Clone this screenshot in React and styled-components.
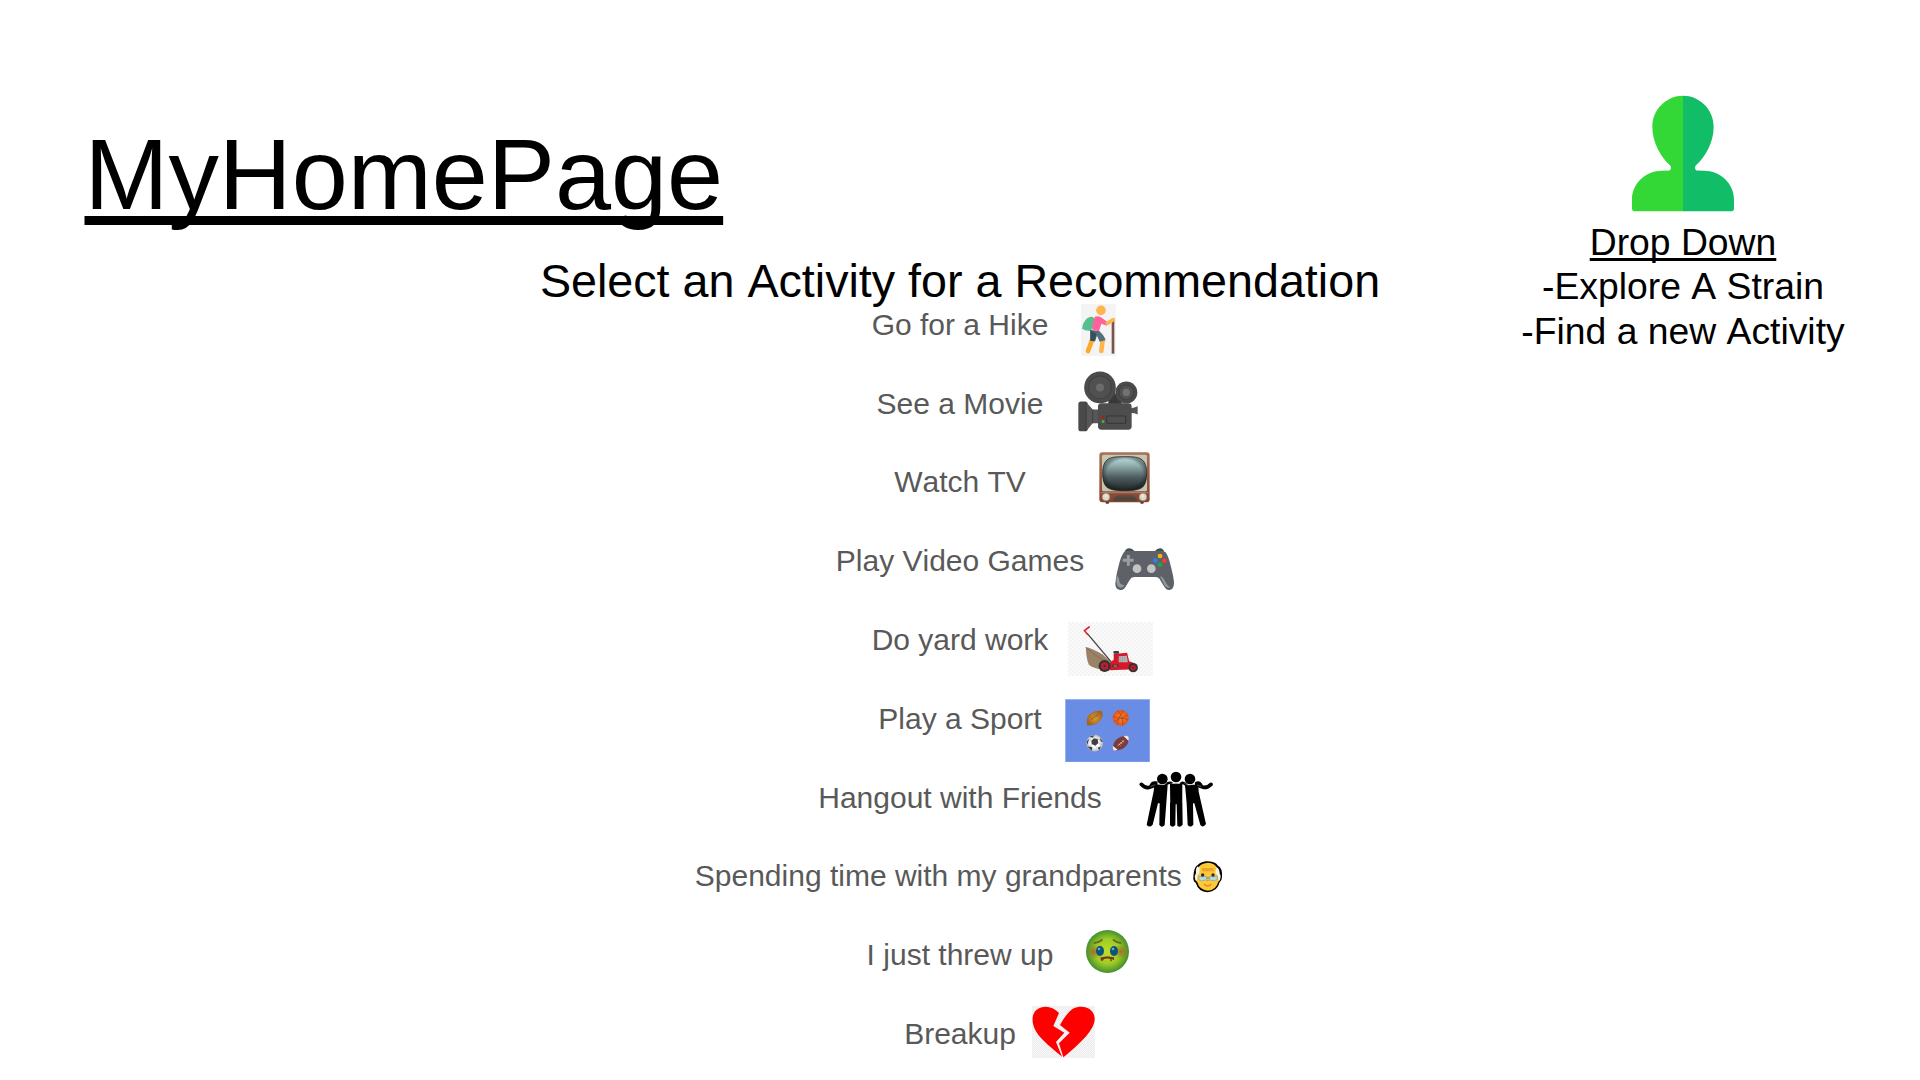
import React from "react";
import styled, { createGlobalStyle } from "styled-components";

const GlobalStyle = createGlobalStyle`
  html, body { margin: 0; background: #fff; }
  body { overflow: hidden; }
`;

const Page = styled.div`
  width: 1920px;
  height: 1080px;
  overflow: hidden;
  background: #fff;
  color: #000;
  display: grid;
  grid-template-columns: 480px 960px 480px;
  grid-template-rows: 255px 825px;
  font-family: Arial, "Liberation Sans", sans-serif;
  font-kerning: none;
`;

const Title = styled.h1`
  grid-column: 1 / 3;
  grid-row: 1;
  margin: 0;
  padding: 114px 0 0 84.5px;
  font-size: 100.8px;
  line-height: 120px;
  font-weight: 400;
  text-decoration: underline;
  text-decoration-thickness: 9px;
  text-underline-offset: 7px;
  text-decoration-skip-ink: none;
`;

const Profile = styled.aside`
  grid-column: 3;
  grid-row: 1 / 3;
  display: flex;
  flex-direction: column;
  align-items: center;
  padding: 95px 0 0 6px;
  font-size: 37.3px;
  line-height: 44.5px;
  white-space: nowrap;
`;

const Avatar = styled.svg`
  display: block;
  width: 102px;
  height: 117px;
  margin-bottom: 7.8px;
`;

const MenuTitle = styled.div`
  text-decoration: underline;
  text-decoration-thickness: 3px;
  text-underline-offset: 3px;
  text-decoration-skip-ink: none;
`;

const MenuItem = styled.div``;

const Main = styled.main`
  grid-column: 2;
  grid-row: 2;
`;

const Heading = styled.h2`
  margin: 0;
  height: 49.8px;
  line-height: 52px;
  font-size: 46.67px;
  font-weight: 400;
  text-align: center;
  white-space: nowrap;
`;

const List = styled.ul`
  list-style: none;
  margin: 0;
  padding: 0;
`;

const Row = styled.li`
  display: grid;
  grid-template-columns: 1fr auto 1fr;
  align-items: start;
  height: 78.8px;
`;

const Label = styled.span`
  grid-column: 2;
  display: flex;
  font-size: 30px;
  line-height: 40px;
  color: #595959;
  white-space: nowrap;
`;

const Icon = styled.svg`
  display: block;
  width: ${(p) => p.$w}px;
  height: ${(p) => p.$h}px;
  margin-left: ${(p) => p.$gap}px;
  margin-right: ${(p) => p.$after || 0}px;
  margin-top: ${(p) => p.$top}px;
`;

const Checker = ({ id, tone = "#efefef" }) => (
  <pattern id={id} width="12" height="12" patternUnits="userSpaceOnUse">
    <rect width="12" height="12" fill="#fbfbfb" />
    <path d="M0 0h6v6H0zM6 6h6v6H6z" fill={tone} />
  </pattern>
);

const Hiker = (
  <>
    <rect x="63" y="12" width="106" height="156" fill="#f4f4f4" />
    <rect x="155" y="62" width="8" height="99" fill="#795548" />
    <path d="M97 50 Q84 49 76 61 Q67 72 66 86 Q77 94 93 92 L106 58Z" fill="#57be8d" />
    <path d="M97 118 L84 153" stroke="#ffa726" strokeWidth="14" strokeLinecap="round" />
    <path d="M128 119 L124 153" stroke="#ffb54d" strokeWidth="14" strokeLinecap="round" />
    <path d="M91 90 L91 122 L105 124 L111 107 L119 125 L136 121 Q137 111 117 92Z" fill="#546e7a" />
    <path d="M91 90 L91 122 L105 124 L109 101Z" fill="#34515e" />
    <path d="M104 50 Q116 47 125 53 L142 66 L141 77 L124 71 L117 94 L95 88Z" fill="#ff6399" />
    <path d="M142 70 L160 59" stroke="#ffb54d" strokeWidth="11" strokeLinecap="round" />
    <circle cx="123" cy="31" r="14.5" fill="#ffb54d" />
  </>
);

const Movie = (
  <>
    <path d="M144 300 L160 273 L184 302 L184 312 L144 312Z" fill="#393939" />
    <circle cx="119" cy="261" r="47.5" fill="#4b4b4b" />
    <circle cx="119" cy="261" r="34" fill="#505050" stroke="#404040" strokeWidth="3" />
    <circle cx="119" cy="261" r="12" fill="#6b6b6b" />
    <circle cx="198" cy="276" r="33" fill="#4a4a4a" />
    <circle cx="198" cy="276" r="22" fill="#525252" stroke="#404040" strokeWidth="3" />
    <circle cx="198" cy="276" r="11" fill="#727272" />
    <rect x="54" y="303" width="28" height="89" rx="8" fill="#4a4a4a" />
    <path d="M77 304 L97 327 L115 327 L115 368 L97 368 L78 391Z" fill="#575757" />
    <path d="M77 305V390M97 327V368" stroke="#343434" strokeWidth="2" />
    <path d="M212 323 L222 321 L232 317 L232 342 L222 338 L212 337Z" fill="#555" />
    <rect x="113" y="308" width="101" height="79" rx="10" fill="#4d4d4d" />
    <rect x="139" y="346" width="57" height="22" rx="3" fill="#505050" stroke="#353535" strokeWidth="3" />
    <circle cx="128" cy="350" r="4.5" fill="#b7171d" />
    <circle cx="128" cy="363" r="4.5" fill="#3dbb18" />
  </>
);

const screenShape =
  "M163 50C190 50 206 51 216 60C227 70 229 86 229 101C229 116 226 132 217 141C206 150 188 152 163 152C138 152 120 150 109 141C100 132 97 116 97 101C97 86 99 70 110 60C120 51 136 50 163 50Z";

const Television = (
  <>
    <defs>
      <linearGradient id="screen" x1="0" y1="0" x2="0" y2="1">
        <stop offset="0" stopColor="#bfe2e2" />
        <stop offset=".25" stopColor="#94afb0" />
        <stop offset=".6" stopColor="#4f5f61" />
        <stop offset="1" stopColor="#1d2324" />
      </linearGradient>
      <radialGradient id="vignette">
        <stop offset=".8" stopColor="#121818" stopOpacity="0" />
        <stop offset="1" stopColor="#121818" stopOpacity=".4" />
      </radialGradient>
      <linearGradient id="wood" x1="0" y1="0" x2="0" y2="1">
        <stop offset="0" stopColor="#a8705a" />
        <stop offset="1" stopColor="#834532" />
      </linearGradient>
    </defs>
    <path d="M104 182h14l-3 9h-8zM208 182h14l-3 9h-8z" fill="#633426" />
    <rect x="87" y="37" width="151" height="150" rx="9" fill="url(#wood)" />
    <rect x="95" y="44" width="135" height="110" rx="5" fill="#c9c6b0" />
    <path d={screenShape} fill="url(#screen)" stroke="#2b302e" strokeWidth="2.5" />
    <path d={screenShape} fill="url(#vignette)" />
    <path d="M91 158H234" stroke="#ba8069" strokeWidth="3" />
    <path d="M126 183 Q131 168 146 166 H184 Q197 168 203 183Z" fill="#5b4b41" />
    <path d="M135 174H194M130 180H199" stroke="#463a32" strokeWidth="2" />
    <circle cx="107" cy="171" r="11.5" fill="#ddd8c7" stroke="#8b8172" strokeWidth="1.5" />
    <circle cx="218" cy="171" r="11.5" fill="#ddd8c7" stroke="#8b8172" strokeWidth="1.5" />
    <path d="M107 163v9M218 163v9" stroke="#fffdf2" strokeWidth="3" />
  </>
);

const Gamepad = (
  <>
    <path d="M74 66 Q77 55 88 55 Q97 55 103 63ZM165 63 Q171 55 180 55 Q190 56 193 66Z" fill="#405057" />
    <path d="M73 65 Q83 61 99 63 H169 Q187 60 197 67 Q206 80 213 111 Q222 145 222 161 Q221 178 208 180 Q199 181 192 169 Q185 158 179 147 Q175 141 166 141 H104 Q94 140 89 150 Q82 162 77 170 Q70 181 60 180 Q46 178 46 162 Q47 142 55 111 Q62 78 73 65Z" fill="#5e6268" />
    <path d="M51 136 Q45 160 56 171 Q66 177 74 165 Q60 166 58 152 Q57 144 51 136ZM180 139 Q190 141 195 153 Q202 169 211 172 Q200 177 192 162Z" fill="#93989b" />
    <path d="M85 75v32M68 91h33" stroke="#9b9da0" strokeWidth="9" />
    <circle cx="111" cy="116" r="13" fill="#c3c3c3" />
    <circle cx="154" cy="116" r="13" fill="#c3c3c3" />
    <circle cx="180" cy="78" r="7" fill="#fbb403" />
    <circle cx="166" cy="91" r="7" fill="#2a80f4" />
    <circle cx="193" cy="92" r="7" fill="#f63b35" />
    <circle cx="180" cy="104" r="7" fill="#1ea34a" />
  </>
);

const Mower = (
  <>
    <defs><Checker id="mowerGrid" tone="#f3f3f3" /></defs>
    <rect x="25" y="36" width="253" height="162" fill="url(#mowerGrid)" />
    <path d="M78 111 Q97 115 127 133 L151 154 L130 179 Q99 175 87 164 Q79 146 78 111Z" fill="#9b8166" />
    <path d="M78 112 Q96 128 121 146 L144 155" fill="none" stroke="#7b6650" strokeWidth="2" />
    <path d="M82 70 L153 155" stroke="#434343" strokeWidth="4" />
    <path d="M88 51 L74 62 L83 73" fill="none" stroke="#df2733" strokeWidth="5" strokeLinecap="round" />
    <path d="M148 158 L161 149 V132 L201 128 L207 154 L223 160 L226 178 L148 181Z" fill="#d41829" />
    <rect x="160" y="123" width="17" height="8" rx="3" fill="#3d3d3d" />
    <path d="M176 139 L200 137 L203 157 H176Z" fill="#b6b6b6" />
    <path d="M180 140v16M187 140v16M194 140v13" stroke="#858585" strokeWidth="1.5" />
    <rect x="157" y="164" width="18" height="7" fill="#353535" />
    <path d="M161 168h10" stroke="#ddd" strokeWidth="2" />
    <circle cx="134" cy="168" r="18" fill="#343234" />
    <circle cx="134" cy="168" r="11" fill="#c51d2d" />
    <circle cx="134" cy="168" r="4" fill="#3c3131" />
    <circle cx="219" cy="173" r="14" fill="#343234" />
    <circle cx="219" cy="173" r="8" fill="#c51d2d" />
    <circle cx="219" cy="173" r="3" fill="#423434" />
  </>
);

const Sports = (
  <>
    <defs>
      <radialGradient id="rugby"><stop offset="0" stopColor="#db9d36" /><stop offset="1" stopColor="#a3641c" /></radialGradient>
      <radialGradient id="basket"><stop offset="0" stopColor="#ff8430" /><stop offset="1" stopColor="#e4541a" /></radialGradient>
      <radialGradient id="soccer"><stop offset=".5" stopColor="#fff" /><stop offset="1" stopColor="#b6b8bd" /></radialGradient>
    </defs>
    <rect x="30" y="27" width="255" height="190" fill="#99b3ef" />
    <rect x="33" y="30" width="250" height="186" fill="#698de4" />
    <path d="M96 102 Q92 83 106 71 Q122 60 141 63 Q147 80 134 94 Q120 108 97 107Z" fill="url(#rugby)" />
    <path d="M108 88 Q121 81 131 71M110 84l4 5M116 80l4 5M122 76l4 5" fill="none" stroke="#74501e" strokeWidth="1.6" />
    <circle cx="197" cy="84" r="24" fill="url(#basket)" />
    <path d="M174 79 Q198 91 218 75M177 96 Q197 77 220 91M188 62 Q206 82 203 107M206 62 Q187 84 188 105" fill="none" stroke="#85401f" strokeWidth="1.7" />
    <circle cx="119" cy="160" r="25" fill="url(#soccer)" />
    <path d="M109 153 L117 145 L128 148 L130 160 L121 168 L110 163ZM104 139 L119 136 L112 144ZM135 143 L144 157 L137 155ZM95 155 L102 148 L97 166ZM97 170 L112 172 L110 183ZM128 174 L138 170 L133 181Z" fill="#3e4043" />
    <path d="M109 153L101 149M117 145L114 141M128 148L136 151M130 160L140 165M121 168L126 175M110 163L104 173" stroke="#9a9a9d" strokeWidth="1.2" />
    <path d="M174 176 Q173 158 187 147 Q201 136 219 140 Q225 155 213 169 Q200 184 178 182Z" fill="#7d3b3a" />
    <path d="M173 168 L188 180 L179 183 Q173 182 174 175ZM206 139 L221 154 Q222 145 220 140 Q214 136 206 139Z" fill="#eceaeb" />
    <path d="M188 168 L207 152M191 162l6 6M196 157l6 6M202 152l5 6" stroke="#e8d2bd" strokeWidth="2" />
  </>
);

const Friends = (
  <g fill="#000">
    <circle cx="97" cy="57" r="16" />
    <circle cx="138" cy="51" r="16" />
    <circle cx="180" cy="57" r="16" />
    <path d="M34 73 Q44 84 55 83 Q65 82 77 72M243 73 Q232 84 220 82 Q211 80 200 72" fill="none" stroke="#000" strokeWidth="11" strokeLinecap="round" strokeLinejoin="round" />
    <path d="M73 75 Q80 71 113 76 L109 129 L104 195 Q96 205 88 195 L89 130 L84 130 L68 194 Q58 205 50 194 L71 94ZM165 76 Q196 72 205 76 L206 95 L228 192 Q219 205 211 195 L193 130 L189 130 L190 194 Q181 205 173 195 L170 130Z" />
    <path d="M120 72 Q138 69 157 72 L157 127 L158 194 Q150 204 142 197 L140 133 L137 133 L136 195 Q127 205 120 195Z" />
    <path d="M62 78 Q66 65 79 68M215 78 Q209 65 199 69M107 75 Q113 66 124 69M153 70 Q161 66 169 75" fill="none" stroke="#000" strokeWidth="8" strokeLinecap="round" />
    <path d="M62 80L76 74M80 68 Q95 80 111 69M121 69 Q138 74 154 68M163 70 Q178 81 195 68M119 84L121 128M158 84L157 128M201 75L214 80" fill="none" stroke="#dcdcdc" strokeWidth="1.1" />
  </g>
);

const Grandparent = (
  <>
    <path d="M383 44 Q396 32 414 33 Q436 34 444 46 Q458 53 456 80 Q456 90 449 96 Q442 124 413 126 Q385 124 377 97 Q369 94 370 79 Q371 51 383 44Z" fill="#000" />
    <path d="M386 50 Q395 38 414 37 Q435 39 440 51 L447 72 L450 89 L445 94 Q439 119 413 121 Q388 119 382 96 L375 88 L378 72Z" fill="#fec936" />
    <path d="M383 48 Q376 54 378 68 L374 78 Q374 88 381 91 L382 74 L388 69 L389 53ZM439 50 L436 69 L443 74 L446 92 Q453 87 452 76 L449 69 Q449 55 439 50Z" fill="#f5f1ed" />
    <path d="M396 53h35v10h-35z" fill="#e9a62b" />
    <path d="M386 79h24v9q-12 6-23 1zM418 79h24v9q-12 6-23 1z" fill="#b5dce3" stroke="#7f9ea8" strokeWidth="2" />
    <path d="M410 83h8" stroke="#667f89" strokeWidth="3" />
    <circle cx="398" cy="74" r="5" fill="#352b22" />
    <circle cx="429" cy="74" r="5" fill="#352b22" />
    <path d="M407 89q6 7 12 0" fill="#ed8961" />
    <path d="M402 101q11 12 22 0" fill="none" stroke="#de9226" strokeWidth="5" />
  </>
);

const Nauseated = (
  <>
    <defs>
      <radialGradient id="face"><stop offset="0" stopColor="#bdde27" /><stop offset=".58" stopColor="#9fcc25" /><stop offset="1" stopColor="#438f2c" /></radialGradient>
      <radialGradient id="cheek"><stop offset="0" stopColor="#a45d25" stopOpacity=".8" /><stop offset="1" stopColor="#9a6524" stopOpacity="0" /></radialGradient>
    </defs>
    <circle cx="112.5" cy="304.5" r="64.5" fill="url(#face)" />
    <circle cx="73" cy="305" r="23" fill="url(#cheek)" />
    <circle cx="153" cy="305" r="23" fill="url(#cheek)" />
    <path d="M71 279Q88 278 97 268M129 268Q138 278 154 279" fill="none" stroke="#616b24" strokeWidth="6" />
    <ellipse cx="90" cy="303" rx="12" ry="15" fill="#08547e" />
    <ellipse cx="132" cy="303" rx="12" ry="15" fill="#08547e" />
    <circle cx="87" cy="297" r="4" fill="#76a3be" />
    <circle cx="129" cy="297" r="4" fill="#76a3be" />
    <path d="M94 322V329Q98 333 101 325Q112 320 123 325V334M130 322V330" fill="none" stroke="#78321d" strokeWidth="4" />
    <path d="M95 325Q112 319 130 325" fill="none" stroke="#78321d" strokeWidth="5" />
  </>
);

const BrokenHeart = (
  <>
    <defs>
      <pattern id="heartGrid" width="6" height="6" patternUnits="userSpaceOnUse">
        <rect width="6" height="6" fill="#f7f7f7" />
        <path d="M0 0h3v3H0zM3 3h3v3H3z" fill="#ececec" />
      </pattern>
    </defs>
    <rect x="36" y="33" width="189" height="156" fill="url(#heartGrid)" />
    <path d="M129 188C105 166 61 134 47 107C32 79 34 48 61 38Q91 28 117 54L100 93L133 113L108 141L126 185Z" fill="#fe0000" />
    <path d="M130 187L117 145L149 113L120 90Q141 52 159 41C184 29 214 36 222 60C233 92 197 132 130 187Z" fill="#fe0000" />
  </>
);

const activities = [
  { name: "Go for a Hike", art: Hiker, box: "63 12 105 156", w: 35, h: 52, gap: 32.6, top: -0.8 },
  { name: "See a Movie", art: Movie, box: "53 212 180 182", w: 60, h: 61, gap: 34.2, top: -12.9 },
  { name: "Watch TV", art: Television, box: "86 36 153 156", w: 51, h: 52, gap: 73, top: -10.4 },
  { name: "Play Video Games", art: Gamepad, box: "45 54 180 129", w: 60, h: 43, gap: 30.8, top: 6.8 },
  { name: "Do yard work", art: Mower, box: "25 36 253 162", w: 85, h: 54, gap: 19.6, top: 2 },
  { name: "Play a Sport", art: Sports, box: "30 27 255 190", w: 85, h: 63, gap: 23.3, top: 0.2 },
  { name: "Hangout with Friends", art: Friends, box: "27 33 225 171", w: 75, h: 57, gap: 37.3, top: -6.6 },
  { name: "Spending time with my grandparents", art: Grandparent, box: "369 32 90 96", w: 30, h: 32, gap: 11.5, after: 2, top: 4.5, inline: true },
  { name: "I just threw up", art: Nauseated, box: "48 240 129 129", w: 43, h: 43, gap: 32.6, top: -5.2 },
  { name: "Breakup", art: BrokenHeart, box: "36 33 189 156", w: 63, h: 52, gap: 16.1, top: -8 },
];

const Activity = ({ item }) => {
  const icon = (
    <Icon
      viewBox={item.box}
      preserveAspectRatio="none"
      $w={item.w}
      $h={item.h}
      $gap={item.gap}
      $after={item.after}
      $top={item.top}
    >
      {item.art}
    </Icon>
  );
  return (
    <Row>
      <Label>
        {item.name}
        {item.inline && icon}
      </Label>
      {!item.inline && icon}
    </Row>
  );
};

export default function App() {
  return (
    <>
      <GlobalStyle />
      <Page>
        <Title>MyHomePage</Title>
        <Profile>
          <Avatar viewBox="396 45 306 351">
            <path d="M549 47C500 47 457 87 457 140C457 190 485 233 510 256Q516 263 510 271Q509 272 487 272C435 272 396 312 396 358V386Q397 394 405 394H549Z" fill="#34d836" />
            <path d="M549 47C598 47 641 87 641 140C641 190 613 233 588 256Q582 263 588 271Q589 272 611 272C663 272 702 312 702 358V386Q701 394 693 394H549Z" fill="#12bd68" />
          </Avatar>
          <MenuTitle>Drop Down</MenuTitle>
          <MenuItem>-Explore A Strain</MenuItem>
          <MenuItem>-Find a new Activity</MenuItem>
        </Profile>
        <Main>
          <Heading>Select an Activity for a Recommendation</Heading>
          <List>
            {activities.map((item) => (
              <Activity key={item.name} item={item} />
            ))}
          </List>
        </Main>
      </Page>
    </>
  );
}
